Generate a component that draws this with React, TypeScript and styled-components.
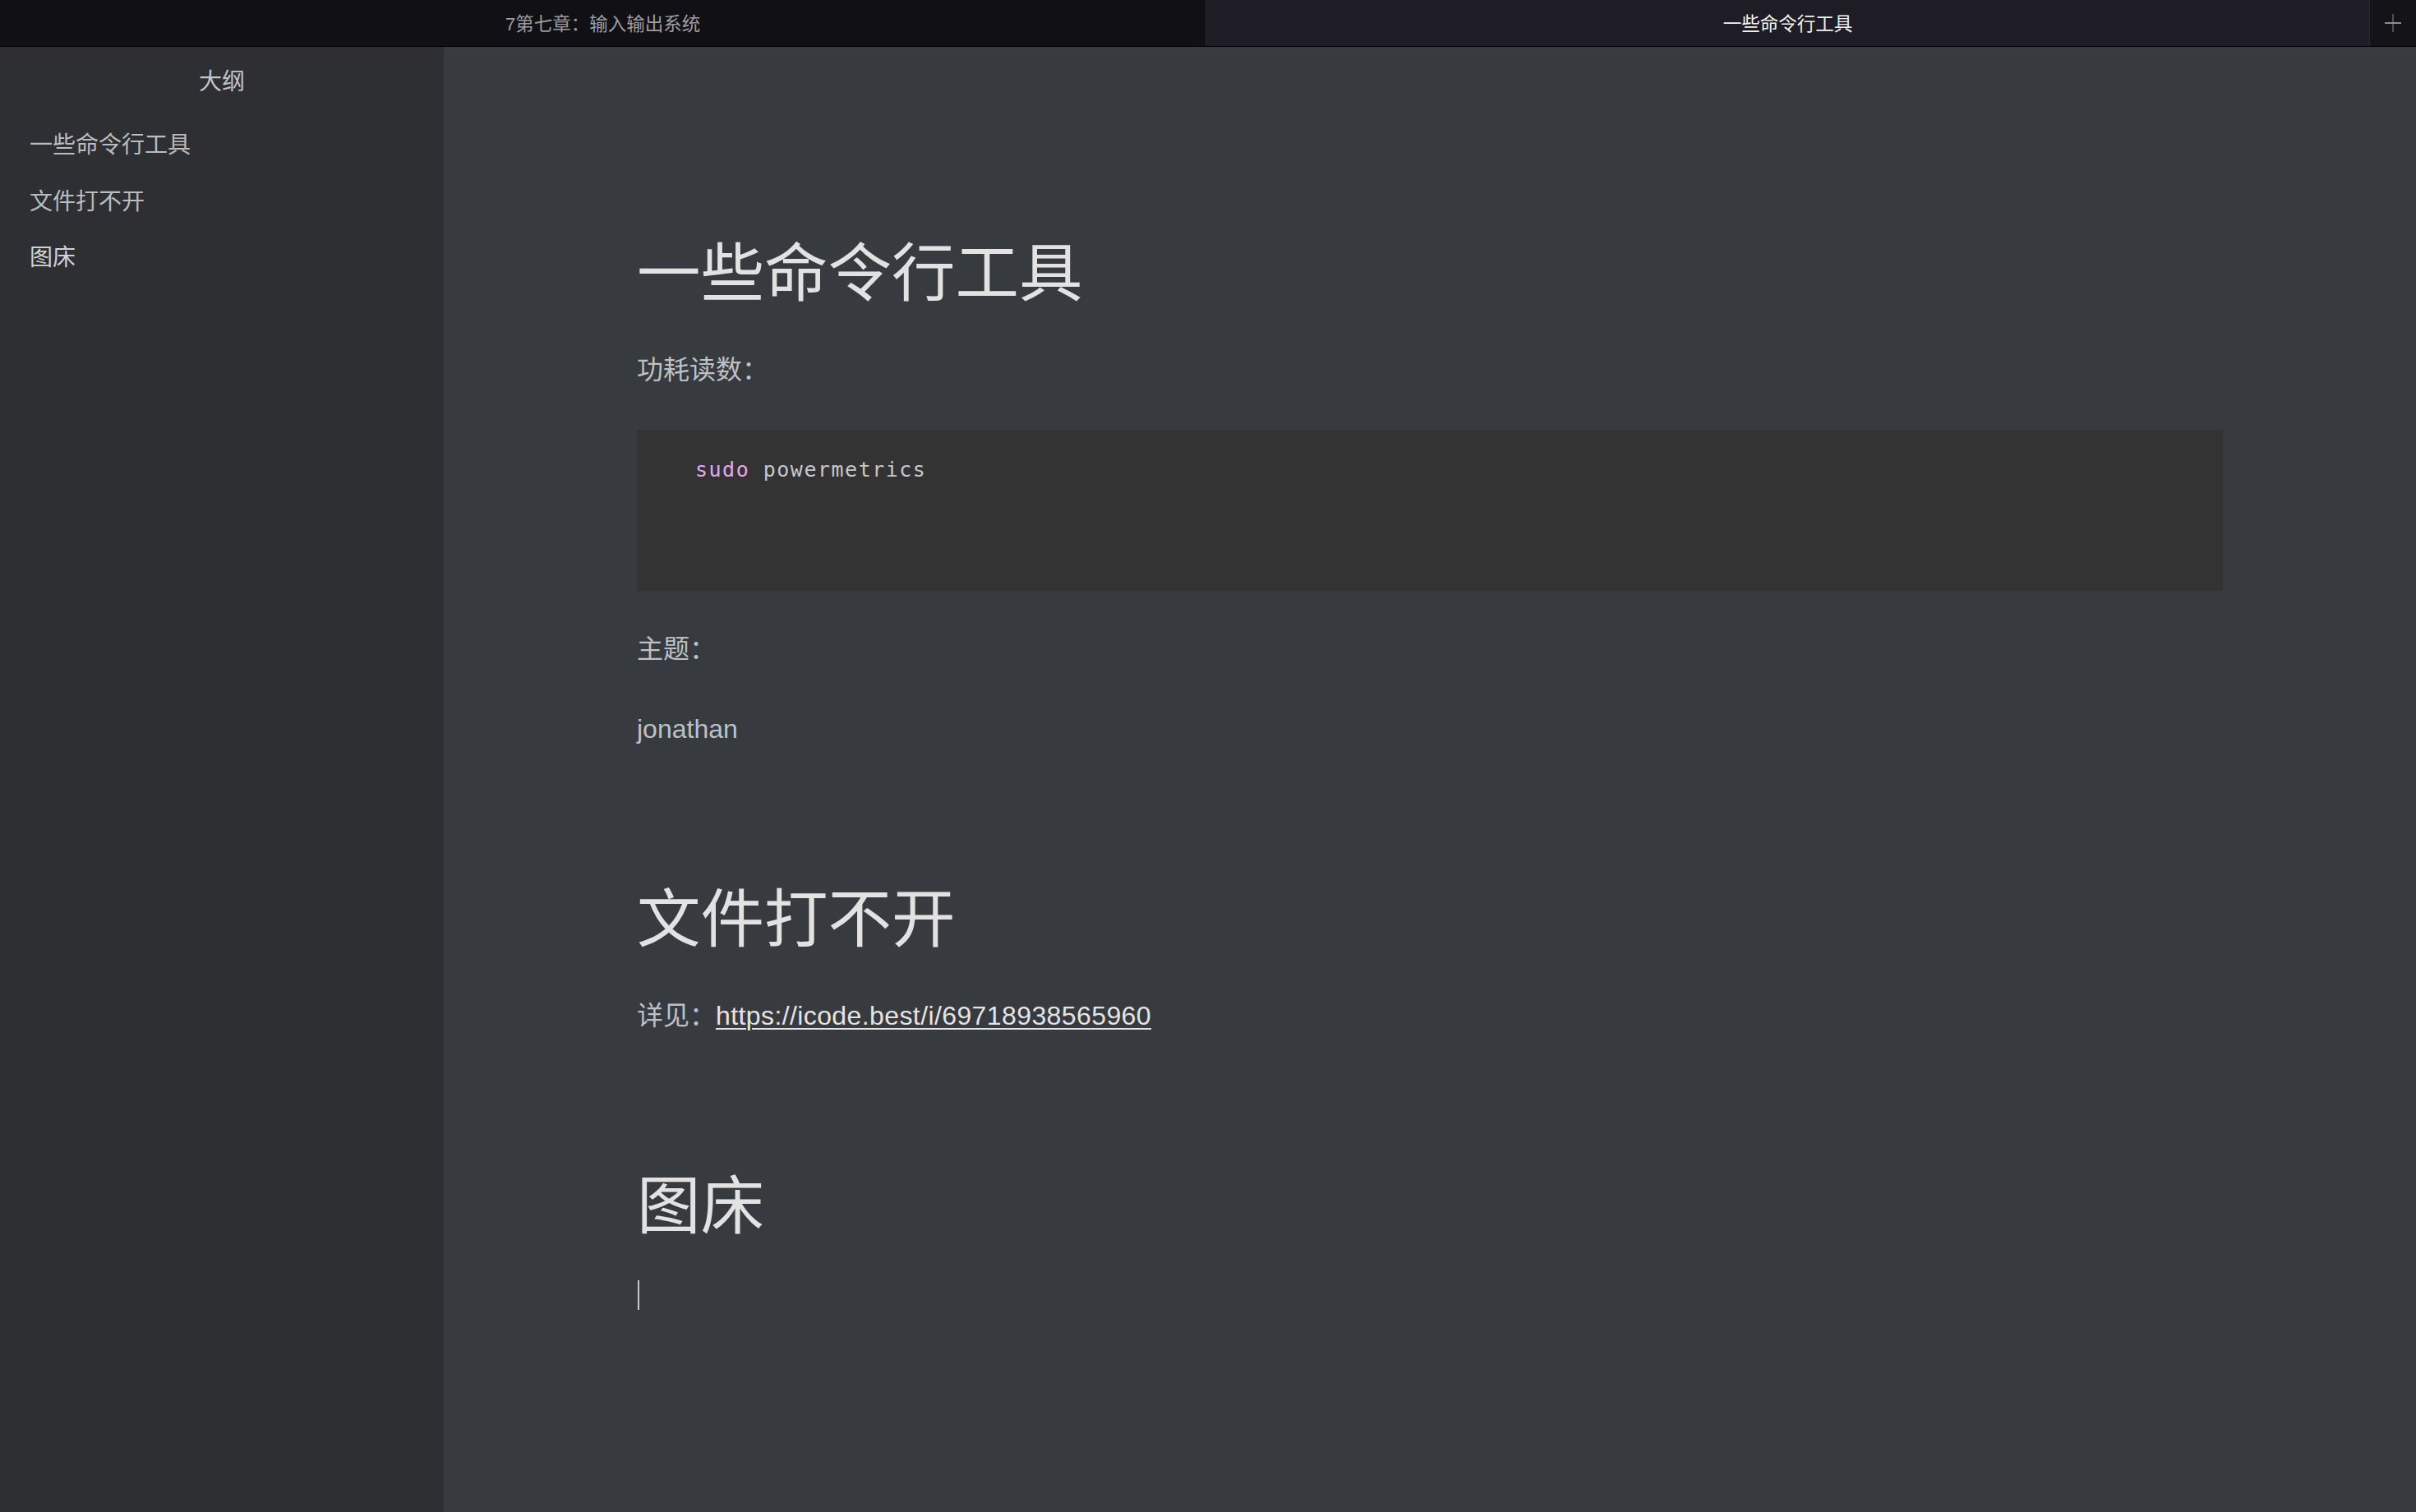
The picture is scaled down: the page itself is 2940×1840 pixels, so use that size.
import React from "react";
import styled, { createGlobalStyle } from "styled-components";

const GlobalStyle = createGlobalStyle`
  html, body {
    margin: 0;
    padding: 0;
    height: 100%;
    background: #373a3f;
  }
  #root { height: 100%; }
  * { box-sizing: border-box; }
`;

const SANS = `"Liberation Sans", "Noto Sans CJK SC", sans-serif`;
const MONO = `"DejaVu Sans Mono", "Liberation Mono", monospace`;

const Window = styled.div`
  display: flex;
  flex-direction: column;
  height: 100vh;
  font-family: ${SANS};
`;

const TabBar = styled.div`
  display: grid;
  grid-template-columns: 1468fr 1416fr 56px;
  height: 57px;
  background: #111015;
  border-bottom: 1px solid #000;
  flex: none;
`;

const Tab = styled.div<{ $active?: boolean }>`
  display: flex;
  align-items: center;
  justify-content: center;
  padding-bottom: 3px;
  font-size: 22.5px;
  color: ${(p) => (p.$active ? "#f2f2f2" : "#9c9ca0")};
  background: ${(p) => (p.$active ? "#1e1c25" : "#111015")};
  border-right: 1px solid ${(p) => (p.$active ? "#2a2930" : "#26252b")};
  white-space: nowrap;
`;

const AddTab = styled.div`
  display: flex;
  align-items: center;
  justify-content: center;
  background: #141318;
  color: #8a8a8e;
`;

const Body = styled.div`
  display: flex;
  flex: 1;
  min-height: 0;
`;

const Sidebar = styled.aside`
  width: 540px;
  flex: none;
  background: #2e2f33;
  color: #babcc0;
  font-size: 28px;
`;

const SidebarTitle = styled.div`
  height: 79px;
  display: flex;
  align-items: center;
  justify-content: center;
  color: #c4c5c8;
`;

const OutlineList = styled.ul`
  list-style: none;
  margin: 0;
  padding: 5px 0 0 36px;
`;

const OutlineItem = styled.li<{ $active?: boolean }>`
  height: 68.5px;
  display: flex;
  align-items: center;
  padding-bottom: 2px;
  color: ${(p) => (p.$active ? "#d0d2d5" : "#babcc0")};
`;

const Main = styled.main`
  flex: 1;
  overflow: hidden;
  background: #373a3f;
  padding: 231px 235px 0;
`;

const Article = styled.article`
  max-width: 1930px;
  margin: 0 auto;
  color: #bec1c4;
  font-size: 32px;
`;

const H1 = styled.h1`
  font-size: 77.5px;
  font-weight: 400;
  line-height: 91px;
  color: #e2e2e2;
  margin: 161px 0 46px;
  &:first-child { margin-top: 0; }
`;

const P = styled.p`
  margin: 46px 0;
  line-height: 51px;
  min-height: 51px;
`;

const Link = styled.a`
  color: #e4e4e4;
  letter-spacing: 0.4px;
  text-decoration: underline;
  text-underline-offset: 4px;
  text-decoration-thickness: 2px;
`;

const CodeBlock = styled.pre`
  margin: 47px 0 41px;
  background: #333333;
  padding: 29px 0 127px 71px;
  font-family: ${MONO};
  font-size: 25px;
  letter-spacing: 1.5px;
  line-height: 40px;
  color: #c4c8cc;
`;

const Keyword = styled.span`
  color: #e7a6ea;
`;

const Caret = styled.span`
  display: inline-block;
  width: 2px;
  height: 36px;
  background: #c8c8c8;
  vertical-align: middle;
  margin-left: 1px;
  transform: translateY(-12px);
`;

const PlusIcon = () => (
  <svg width="24" height="24" viewBox="0 0 24 24">
    <line x1="12" y1="1" x2="12" y2="23" stroke="#8e8e92" strokeWidth="1" />
    <line x1="2" y1="12" x2="22" y2="12" stroke="#8e8e92" strokeWidth="2" />
  </svg>
);

export default function App() {
  return (
    <>
      <GlobalStyle />
      <Window>
        <TabBar>
          <Tab>7第七章：输入输出系统</Tab>
          <Tab $active>一些命令行工具</Tab>
          <AddTab>
            <PlusIcon />
          </AddTab>
        </TabBar>
        <Body>
          <Sidebar>
            <SidebarTitle>大纲</SidebarTitle>
            <OutlineList>
              <OutlineItem>一些命令行工具</OutlineItem>
              <OutlineItem>文件打不开</OutlineItem>
              <OutlineItem $active>图床</OutlineItem>
            </OutlineList>
          </Sidebar>
          <Main>
            <Article>
              <H1>一些命令行工具</H1>
              <P>功耗读数：</P>
              <CodeBlock>
                <Keyword>sudo</Keyword> powermetrics
              </CodeBlock>
              <P>主题：</P>
              <P>jonathan</P>
              <H1>文件打不开</H1>
              <P>
                详见：<Link href="#">https://icode.best/i/69718938565960</Link>
              </P>
              <H1>图床</H1>
              <P>
                <Caret />
              </P>
            </Article>
          </Main>
        </Body>
      </Window>
    </>
  );
}
